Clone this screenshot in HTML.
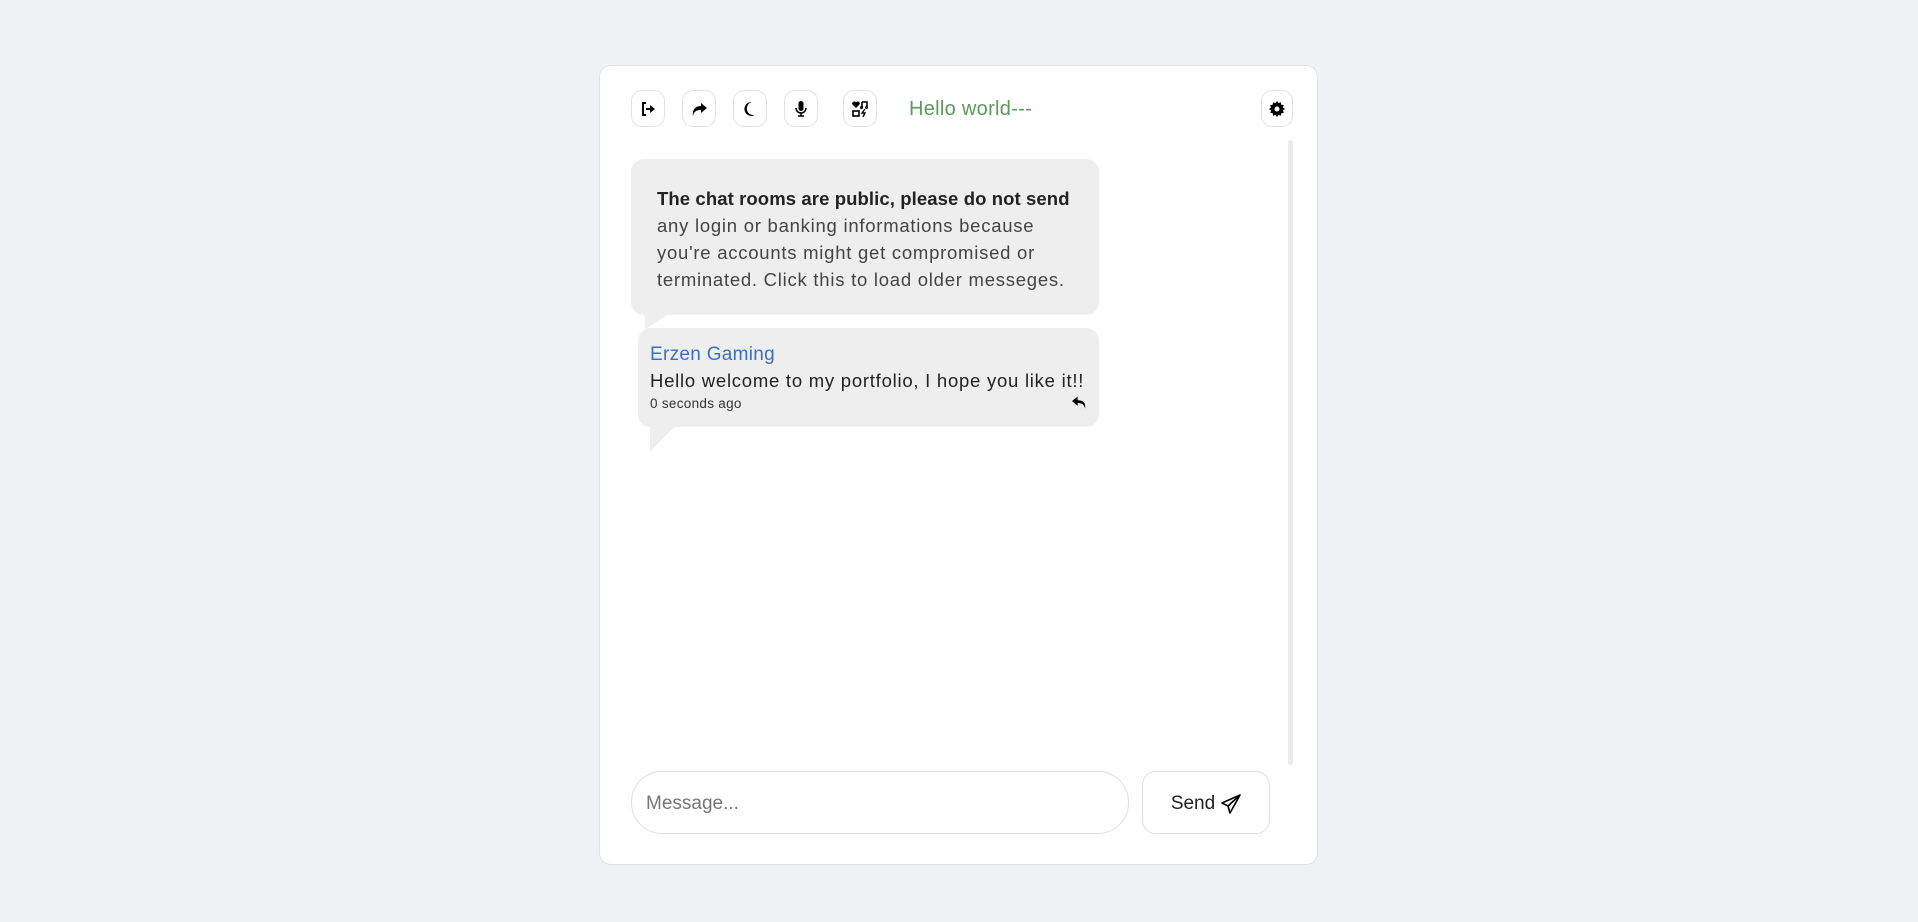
<!DOCTYPE html>
<html><head><meta charset="utf-8"><style>
*{box-sizing:border-box;margin:0;padding:0}
body{width:1918px;height:922px;background:#f0f1f5;font-family:"Liberation Sans",sans-serif;position:relative;overflow:hidden}
.card{position:absolute;left:599px;top:65px;width:719px;height:800px;background:#fff;border:1px solid #e2e3e6;border-radius:12px}
.btn{position:absolute;top:90px;width:34px;height:37px;border:1px solid #e3e3e3;border-radius:11px;background:#fff;display:flex;align-items:center;justify-content:center}
.btn svg{width:16px;height:16px}
.hello{position:absolute;left:909px;top:98px;font-size:20px;color:#5b9a5b;letter-spacing:0.3px}
.scroll{position:absolute;left:1288px;top:140px;width:5px;height:625px;background:#ebebee;border-radius:3px}
.b1{position:absolute;left:631px;top:159px;width:468px;height:156px;background:#eeeeee;border-radius:13px;padding:26px 26px;font-size:18.5px;line-height:27px;color:#444;letter-spacing:0.75px}
.b1 b{color:#222;letter-spacing:0.1px}
.b2{position:absolute;left:638px;top:328px;width:461px;height:99px;background:#eeeeee;border-radius:13px;padding:14px 12px}
.name{color:#3d6fc0;font-size:19px;line-height:26px;letter-spacing:0.3px}
.msg{color:#222;font-size:18.5px;line-height:26px;letter-spacing:0.75px}
.time{color:#333;font-size:13.5px;line-height:20px;letter-spacing:0.3px}
.input{position:absolute;left:631px;top:771px;width:498px;height:63px;border:1px solid #e0e0e0;border-radius:31px;padding-left:14px;font-size:19px;color:#777;line-height:63px}
.send{position:absolute;left:1142px;top:771px;width:128px;height:63px;border:1px solid #e0e0e0;border-radius:14px;font-size:19px;color:#222;display:flex;align-items:center;justify-content:center;gap:6px;padding-top:2px}
</style></head><body>
<div class="card"></div>
<div class="btn" style="left:631px"><svg viewBox="0 0 16 16"><path d="M6 2H3v12h3" fill="none" stroke="#000" stroke-width="2"/><path d="M6 7h4V4l5 4-5 4V9H6z" fill="#000"/></svg></div>
<div class="btn" style="left:682px"><svg viewBox="0 0 16 16"><path d="M10 2l6 5-6 5V9C6 9 3 10 2 15 1 8 5 5 10 5z" fill="#000"/></svg></div>
<div class="btn" style="left:733px"><svg viewBox="0 0 16 16"><path d="M10 1A7 7 0 1 0 13 14 6 6 0 0 1 10 1z" fill="#000"/></svg></div>
<div class="btn" style="left:784px"><svg viewBox="0 0 16 16"><rect x="5.5" y="0" width="5" height="10" rx="2.5" fill="#000"/><path d="M3 7a5 5 0 0 0 10 0M8 12v3M5 15h6" fill="none" stroke="#000" stroke-width="1.5"/></svg></div>
<div class="btn" style="left:843px"><svg viewBox="0 0 16 16"><path d="M4 7L0.5 3.5A2 2 0 0 1 4 1.5 2 2 0 0 1 7.5 3.5z" fill="#000"/><path d="M10 1h5v6M10 1v5" fill="none" stroke="#000" stroke-width="1.6"/><circle cx="9.5" cy="6.5" r="1.5"/><circle cx="14.5" cy="6.5" r="1.5"/><rect x="1" y="10" width="6" height="5" fill="none" stroke="#000" stroke-width="1.6"/><path d="M13 8l-3 4h3l-2 4" fill="none" stroke="#000" stroke-width="1.4"/></svg></div>
<div class="hello">Hello world---</div>
<div class="btn" style="left:1261px;width:32px"><svg viewBox="0 0 16 16"><path d="M8 0l1.5 2 2.4-.8.3 2.5 2.5.3-.8 2.4L16 8l-2 1.5.8 2.4-2.5.3-.3 2.5-2.4-.8L8 16l-1.5-2-2.4.8-.3-2.5-2.5-.3.8-2.4L0 8l2-1.5-.8-2.4 2.5-.3.3-2.5 2.4.8z" fill="#000"/><circle cx="8" cy="8" r="2.5" fill="#fff"/></svg></div>
<div class="scroll"></div>
<div class="b1"><b>The chat rooms are public, please do not send</b><br>any login or banking informations because<br>you're accounts might get compromised or<br>terminated. Click this to load older messeges.</div>
<svg style="position:absolute;left:645px;top:314px" width="30" height="16"><path d="M0 0H24L0 15z" fill="#eee"/></svg>
<div class="b2"><div class="name">Erzen Gaming</div><div class="msg">Hello welcome to my portfolio, I hope you like it!!</div><div class="time">0 seconds ago</div>
<svg style="position:absolute;right:12px;top:68px" width="15" height="14" viewBox="0 0 16 14"><path d="M6 0L0 5l6 5V7c5 0 7 2 8 6 1-6-2-9-8-9z" fill="#000"/></svg></div>
<svg style="position:absolute;left:650px;top:426px" width="30" height="27"><path d="M0 0H25L0 26z" fill="#eee"/></svg>
<div class="input">Message...</div>
<div class="send">Send <svg width="20" height="20" viewBox="0 0 20 20"><path d="M19 1L1 9l6 3 2 7zM7 12L19 1" fill="none" stroke="#000" stroke-width="1.6" stroke-linejoin="round"/></svg></div>
</body></html>
